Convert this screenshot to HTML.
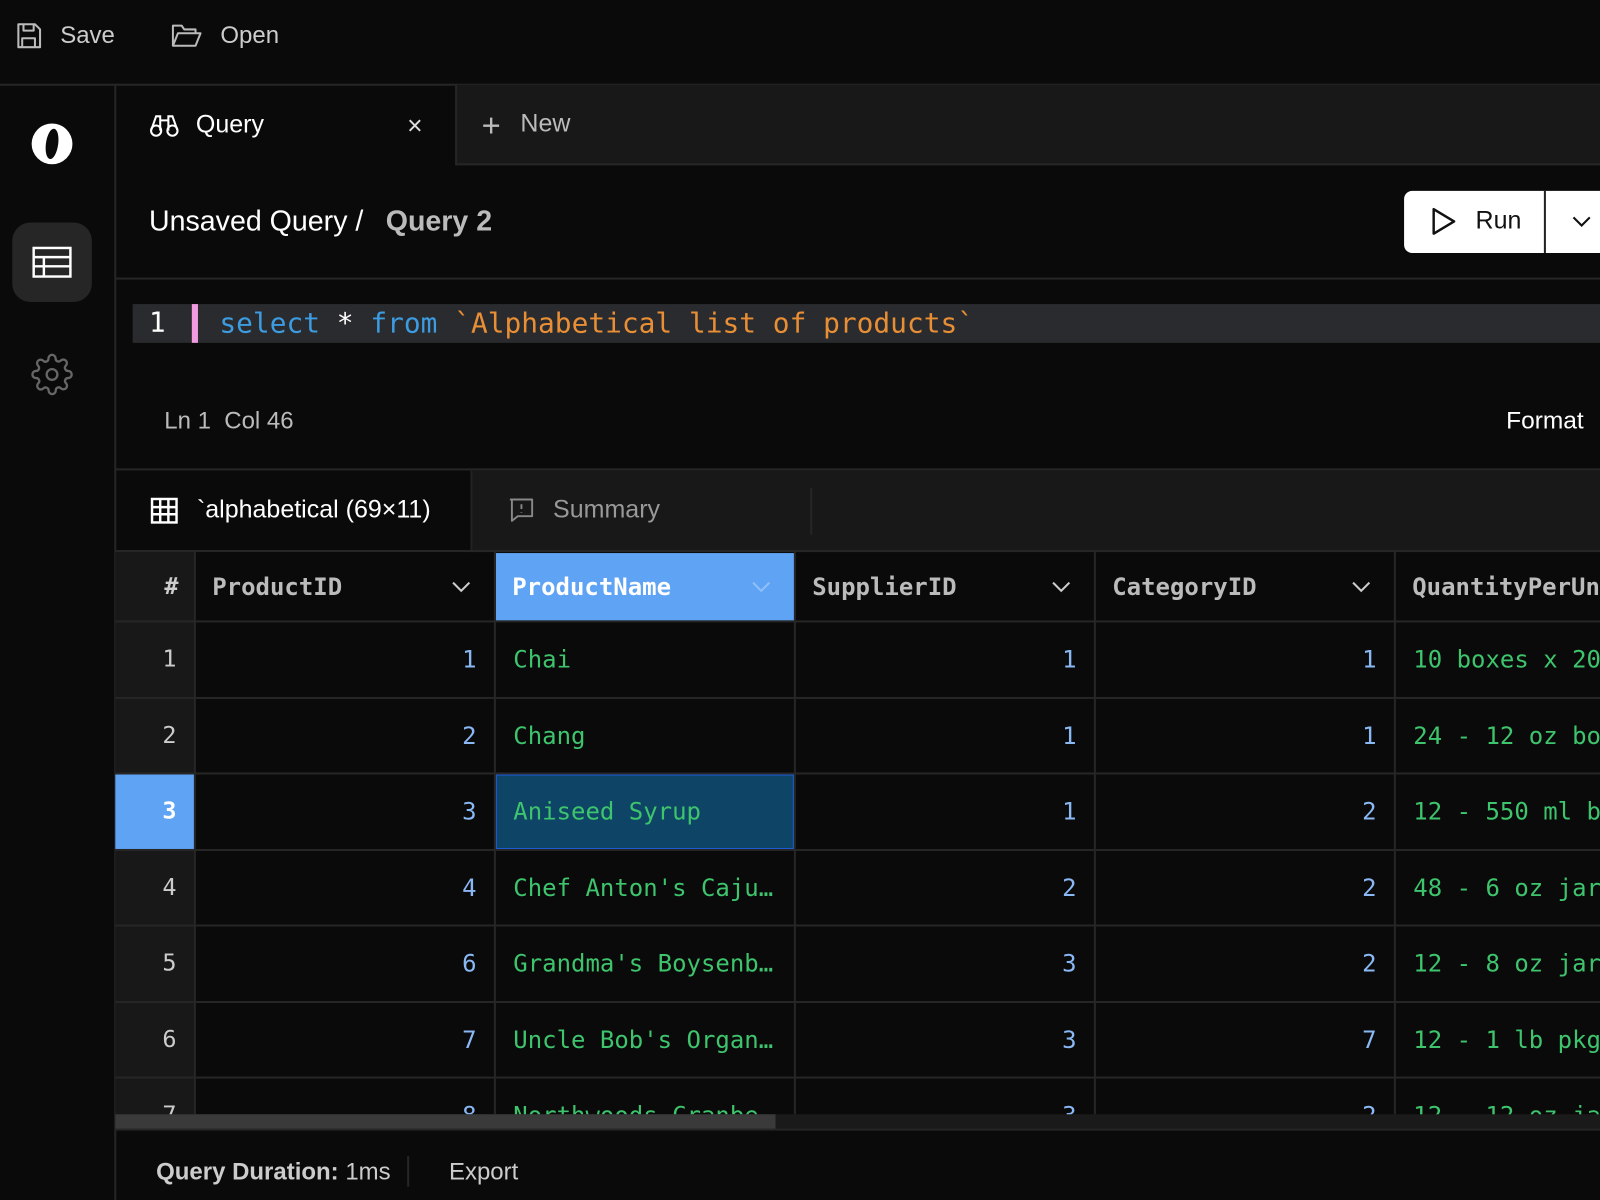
<!DOCTYPE html>
<html><head><meta charset="utf-8"><style>
*{box-sizing:border-box;margin:0;padding:0}
html,body{width:1600px;height:1200px;overflow:hidden;background:#0a0a0a}
#w{position:absolute;left:0;top:0;width:1568px;height:1176px;transform:scale(1.020408);transform-origin:0 0;background:#0a0a0a;font-family:"Liberation Sans",sans-serif;color:#fff;overflow:hidden}
.a{position:absolute}
.mono{font-family:"DejaVu Sans Mono","Liberation Mono",monospace}
.hl{position:absolute;height:2px;background:#262626}
.vl{position:absolute;width:2px;background:#262626}
.t{position:absolute;white-space:nowrap;line-height:1}
</style></head><body><div id="w">
<!-- top bar -->
<svg class="a" style="left:13px;top:20px" width="30" height="30" viewBox="0 0 24 24" fill="none" stroke="#bbb" stroke-width="1.6" stroke-linejoin="round"><path d="M4 3h13l4 4v14H4z"/><path d="M8 3v5h8V3M7 21v-7h10v7"/></svg>
<div class="t" style="left:59px;top:23px;font-size:23.5px;color:#ccc">Save</div>
<svg class="a" style="left:167px;top:20px" width="32" height="30" viewBox="0 0 26 24" fill="none" stroke="#bbb" stroke-width="1.6" stroke-linejoin="round"><path d="M2 20V4h7l2 3h9v3"/><path d="M2 20l4-10h18l-4 10z"/></svg>
<div class="t" style="left:216px;top:23px;font-size:23.5px;color:#ccc">Open</div>
<div class="hl" style="left:0;top:82px;width:1568px"></div>
<!-- sidebar -->
<div class="vl" style="left:112px;top:83px;height:1100px"></div>
<svg class="a" style="left:30px;top:120px" width="42" height="42" viewBox="0 0 42 42"><ellipse cx="21" cy="21" rx="20" ry="20" fill="#fff"/><ellipse cx="21" cy="21" rx="6" ry="15" fill="#0a0a0a" transform="rotate(8 21 21)"/></svg>
<div class="a" style="left:12px;top:218px;width:78px;height:78px;border-radius:18px;background:#262626"></div>
<svg class="a" style="left:31px;top:241px" width="40" height="32" viewBox="0 0 40 32" fill="none" stroke="#fff" stroke-width="2.4"><rect x="2" y="2" width="36" height="28"/><path d="M2 11h36M2 20h36M12 11v19"/></svg>
<svg class="a" style="left:30px;top:346px" width="42" height="42" viewBox="0 0 24 24" fill="none" stroke="#666" stroke-width="1.3"><circle cx="12" cy="12" r="3"/><path d="M19.4 15a1.65 1.65 0 0 0 .33 1.82l.06.06a2 2 0 1 1-2.83 2.83l-.06-.06a1.65 1.65 0 0 0-1.82-.33 1.65 1.65 0 0 0-1 1.51V21a2 2 0 0 1-4 0v-.09A1.65 1.65 0 0 0 9 19.4a1.650 1.65 0 0 0-1.82.33l-.06.06a2 2 0 1 1-2.83-2.83l.06-.06A1.65 1.65 0 0 0 4.68 15a1.65 1.65 0 0 0-1.51-1H3a2 2 0 0 1 0-4h.09A1.65 1.65 0 0 0 4.6 9a1.65 1.65 0 0 0-.33-1.820l-.06-.06a2 2 0 1 1 2.830-2.83l.06.06A1.65 1.65 0 0 0 9 4.68 1.65 1.65 0 0 0 10 3.17V3a2 2 0 0 1 4 0v.09a1.65 1.65 0 0 0 1 1.51 1.65 1.65 0 0 0 1.82-.33l.06-.06a2 2 0 1 1 2.83 2.83l-.06.06A1.65 1.65 0 0 0 19.4 9a1.65 1.65 0 0 0 1.51 1H21a2 2 0 0 1 0 4h-.09a1.65 1.65 0 0 0-1.51 1z"/></svg>
<!-- tabs -->
<div class="a" style="left:446px;top:83px;width:1122px;height:79px;background:#181818;border-left:2px solid #262626;border-bottom:2px solid #262626"></div>
<svg class="a" style="left:146px;top:110px" width="30" height="26" viewBox="0 0 30 26" fill="none" stroke="#fff" stroke-width="2"><circle cx="7" cy="18" r="5"/><circle cx="23" cy="18" r="5"/><path d="M2 18L7 4h4v14M28 18L23 4h-4v14M11 8h8"/></svg>
<div class="t" style="left:192px;top:111px;font-size:24.5px">Query</div>
<div class="t" style="left:399px;top:110px;font-size:26px;color:#ddd">×</div>
<div class="t" style="left:472px;top:107px;font-size:32px;color:#bbb;font-weight:300">+</div>
<div class="t" style="left:510px;top:110px;font-size:24.5px;color:#bbb">New</div>
<!-- header -->
<div class="t" style="left:146px;top:203px;font-size:28px">Unsaved Query /</div>
<div class="t" style="left:378px;top:203px;font-size:28px;color:#bbb;font-weight:bold">Query 2</div>
<div class="a" style="left:1376px;top:187px;width:200px;height:61px;background:#fff;border-radius:8px"></div>
<div class="a" style="left:1513px;top:187px;width:2px;height:61px;background:#222"></div>
<svg class="a" style="left:1402px;top:203px" width="26" height="28" viewBox="0 0 26 28" fill="none" stroke="#111" stroke-width="2.4" stroke-linejoin="round"><path d="M3 2v24l20-12z"/></svg>
<div class="t" style="left:1446px;top:205px;font-size:24.5px;color:#111">Run</div>
<svg class="a" style="left:1540px;top:210px" width="20" height="14" viewBox="0 0 20 14" fill="none" stroke="#111" stroke-width="2"><path d="M2 3l8 8 8-8"/></svg>
<div class="hl" style="left:113px;top:272px;width:1455px"></div>
<!-- editor -->
<div class="a" style="left:130px;top:298px;width:1438px;height:38px;background:#2a2b2e"></div>
<div class="a" style="left:188px;top:298px;width:6px;height:38px;background:#f29be0"></div>
<div class="t mono" style="left:146px;top:303px;font-size:27px;color:#fff">1</div>
<div class="t mono" style="left:215px;top:304px;font-size:27.3px;color:#3d9be0">select <span style="color:#fff">*</span> from <span style="color:#e88f36">`Alphabetical list of products`</span></div>
<div class="t" style="left:161px;top:401px;font-size:23.5px;color:#bbb">Ln 1 &nbsp;Col 46</div>
<div class="t" style="left:1476px;top:401px;font-size:24px;color:#fff">Format</div>
<div class="hl" style="left:113px;top:459px;width:1455px"></div>
<!-- results tabs -->
<div class="a" style="left:461px;top:461px;width:1107px;height:80px;background:#181818;border-left:2px solid #222"></div>
<div class="vl" style="left:794px;top:478px;height:46px"></div>
<svg class="a" style="left:147px;top:487px" width="28" height="27" viewBox="0 0 28 27" fill="none" stroke="#fff" stroke-width="2.4"><rect x="2" y="2" width="24" height="23"/><path d="M10 2v23M18 2v23M2 10h24M2 17h24"/></svg>
<div class="t" style="left:193px;top:488px;font-size:24.5px">`alphabetical (69×11)</div>
<svg class="a" style="left:497px;top:486px" width="28" height="28" viewBox="0 0 24 24" fill="none" stroke="#888" stroke-width="1.6" stroke-linejoin="round"><path d="M3 3h18v14H9l-5 4V3z"/><path d="M12 7v4M12 13.5v.5"/></svg>
<div class="t" style="left:542px;top:488px;font-size:24.5px;color:#999">Summary</div>
<div class="hl" style="left:113px;top:539px;width:1455px"></div>
<!-- table -->
<div class="a" style="left:113px;top:541px;width:78px;height:551px;background:#181818"></div>
<div class="a" style="left:486px;top:542px;width:293px;height:66px;background:#5fa3f5"></div>
<div class="a" style="left:113px;top:759px;width:78px;height:73px;background:#5fa3f5"></div>
<div class="a" style="left:485px;top:758px;width:294px;height:75px;background:#0e4566;border:2px solid #1e5bd6"></div>
<div id="grid"></div>
<div class="a" style="left:113px;top:1092px;width:1455px;height:15px;background:#1a1a1a"></div>
<div class="a" style="left:113px;top:1092px;width:647px;height:15px;background:#3a3a3a"></div>
<div class="hl" style="left:113px;top:1106px;width:1455px"></div>
<div class="t" style="left:153px;top:1137px;font-size:23.5px;color:#ccc"><b>Query Duration:</b> 1ms</div>
<div class="vl" style="left:399px;top:1133px;height:30px"></div>
<div class="t" style="left:440px;top:1137px;font-size:23.5px;color:#ccc">Export</div>
</div>
<script>
(function(){
var g=document.getElementById('grid'),h='';
var cols=[113,191,485,779,1073,1367];
var rows=[609,684,758,833,907,982,1056];
for(var i=1;i<cols.length;i++)h+='<div class="vl" style="left:'+(cols[i]-1)+'px;top:541px;height:551px"></div>';
for(var j=0;j<rows.length;j++)h+='<div class="hl" style="left:113px;top:'+(rows[j]-1)+'px;width:1455px"></div>';
var hd=['ProductID','ProductName','SupplierID','CategoryID','QuantityPerUnit'];
h+='<div class="t mono" style="left:113px;width:62px;text-align:right;top:564px;font-size:23px;font-weight:bold;color:#ccc">#</div>';
for(var k=0;k<5;k++){var x=cols[k+1];var sel=k==1;
h+='<div class="t mono" style="left:'+(x+17)+'px;top:564px;font-size:23.5px;font-weight:bold;color:'+(sel?'#fff':'#bbb')+'">'+hd[k]+'</div>';
if(k<4)h+='<svg class="a" style="left:'+(x+251)+'px;top:568px" width="20" height="14" viewBox="0 0 20 14" fill="none" stroke="'+(sel?'#8fbff7':'#ccc')+'" stroke-width="2"><path d="M2 3l8 8 8-8"/></svg>';}
var d=[[1,'Chai',1,1,'10 boxes x 20 bags'],[2,'Chang',1,1,'24 - 12 oz bottles'],[3,'Aniseed Syrup',1,2,'12 - 550 ml bottles'],[4,"Chef Anton's Caju…",2,2,'48 - 6 oz jars'],[6,"Grandma's Boysenb…",3,2,'12 - 8 oz jars'],[7,"Uncle Bob's Organ…",3,7,'12 - 1 lb pkgs.'],[8,'Northwoods Cranbe…',3,2,'12 - 12 oz jars']];
for(var r=0;r<7;r++){var y=rows[r]+26;var row=d[r];
h+='<div class="t mono" style="left:113px;width:60px;text-align:right;top:'+y+'px;font-size:23px;color:'+(r==2?'#fff':'#ccc')+';font-weight:'+(r==2?'bold':'normal')+'">'+(r+1)+'</div>';
h+='<div class="t mono" style="left:'+(cols[1])+'px;width:276px;text-align:right;top:'+y+'px;font-size:23.5px;color:#8ab8f5">'+row[0]+'</div>';
h+='<div class="t mono" style="left:'+(cols[2]+18)+'px;top:'+y+'px;font-size:23.5px;color:#3ec46d">'+row[1]+'</div>';
h+='<div class="t mono" style="left:'+(cols[3])+'px;width:276px;text-align:right;top:'+y+'px;font-size:23.5px;color:#8ab8f5">'+row[2]+'</div>';
h+='<div class="t mono" style="left:'+(cols[4])+'px;width:276px;text-align:right;top:'+y+'px;font-size:23.5px;color:#8ab8f5">'+row[3]+'</div>';
h+='<div class="t mono" style="left:'+(cols[5]+18)+'px;top:'+y+'px;font-size:23.5px;color:#3ec46d">'+row[4]+'</div>';}
g.innerHTML=h;
})();
</script>
</body></html>
